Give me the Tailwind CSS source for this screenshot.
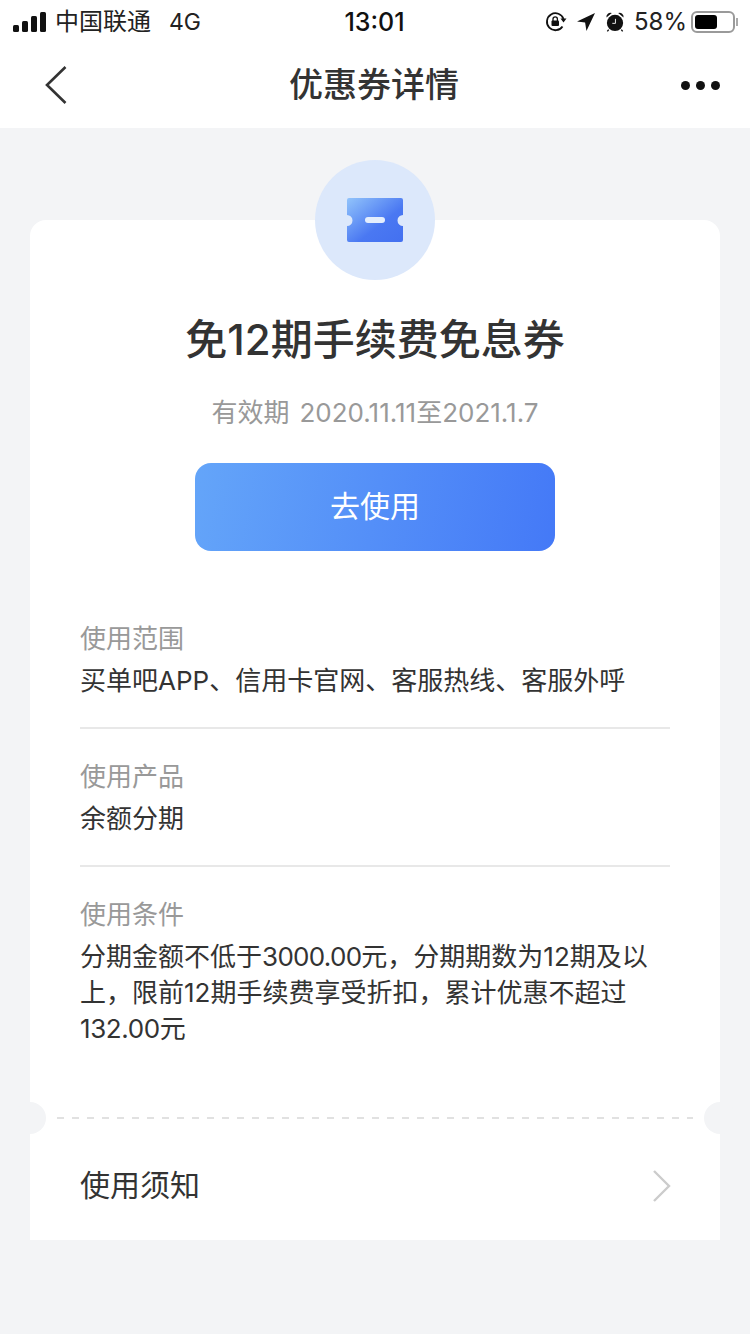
<!DOCTYPE html>
<html lang="zh-CN">
<head>
    <meta charset="UTF-8">
    <meta name="viewport" content="width=device-width, initial-scale=1.0">
    <title>优惠券详情</title>
    <script src="https://cdn.jsdelivr.net/npm/@tailwindcss/browser@4"></script>
</head>
<body class="w-[750px] h-[1334px] overflow-hidden bg-[#f3f4f6] font-['Inter','Noto_Sans_CJK_SC',sans-serif] text-[#333]">
    <!-- status bar -->
    <div class="h-[44px] bg-white flex items-center justify-between pl-[13px] pr-[12px] text-[#222] text-[25px] leading-none">
        <div class="flex items-center w-[250px]">
            <svg width="34" height="20" viewBox="0 0 34 20" fill="#111"><rect x="0" y="13" width="6" height="7" rx="1.5"/><rect x="9" y="9" width="6" height="11" rx="1.5"/><rect x="18" y="4" width="6" height="16" rx="1.5"/><rect x="27" y="0" width="6" height="20" rx="1.5"/></svg>
            <span class="ml-[8px] text-[24px]">中国联通</span>
            <span class="ml-[18px] text-[23px]">4G</span>
        </div>
        <div class="font-medium text-[25px] text-[#111] mr-[2px]">13:01</div>
        <div class="flex items-center justify-end w-[250px]">
            <svg width="22" height="22" viewBox="0 0 22 22" fill="none"><path d="M17.500 15.500A8.500 8.500 0 1 1 18.500 8" stroke="#111" stroke-width="1.800"/><path d="M15.500 7.500h6l-3 4z" fill="#111"/><rect x="6.500" y="9.500" width="7.500" height="5.500" rx="1" fill="#111"/><path d="M8 10V8a2.200 2.200 0 0 1 4.400 0v2" stroke="#111" stroke-width="1.300"/></svg>
            <svg class="ml-[10px]" width="18" height="18" viewBox="0 0 20 20" fill="#111"><path d="M20 0 0 9.500l9 1L10.500 20z"/></svg>
            <svg class="ml-[11px]" width="18" height="20" viewBox="0 0 20 22" fill="#111"><circle cx="10" cy="12" r="9"/><path d="M0.500 6a4.500 4.500 0 0 1 6-5zM19.500 6a4.500 4.500 0 0 0-6-5z"/><path d="M3 19.500 1.500 21.500M17 19.500l1.500 2" stroke="#111" stroke-width="1.500"/><path d="M10.500 7.500v5H7" stroke="#fff" stroke-width="1" fill="none"/></svg>
            <span class="ml-[10px] text-[24px]">58%</span>
            <div class="ml-[4px] w-[44px] h-[22px] rounded-[6px] border-2 border-[#9a9a9a] p-[2px]">
                <div class="w-[22px] h-full rounded-[3px] bg-black"></div>
            </div>
            <div class="w-[2px] h-[8px] bg-[#aaa] ml-[1px]"></div>
        </div>
    </div>
    <!-- nav -->
    <div class="h-[84px] bg-white flex items-center justify-between pl-[44px] pr-[30px] pb-[2px]">
        <svg width="24" height="40" viewBox="0 0 24 40" fill="none"><path d="M21.500 2 3 20l18.500 18" stroke="#333" stroke-width="2.600"/></svg>
        <h1 class="text-[34px] font-medium text-[#333] leading-none mr-[1px]">优惠券详情</h1>
        <div class="flex gap-[6px]">
            <span class="w-[9px] h-[9px] rounded-full bg-[#111]"></span>
            <span class="w-[9px] h-[9px] rounded-full bg-[#111]"></span>
            <span class="w-[9px] h-[9px] rounded-full bg-[#111]"></span>
        </div>
    </div>
    <main class="px-[30px] pt-[92px]">
        <div class="relative h-[1020px] bg-white rounded-t-[16px]">
            <!-- coupon badge -->
            <div class="absolute left-[285px] top-[-60px] w-[120px] h-[120px] rounded-full bg-[#dce8fb] flex items-center justify-center">
                <svg width="56" height="44" viewBox="0 0 56 44">
                    <defs><linearGradient id="ticket" x1="0" y1="0" x2="1" y2="1"><stop offset="0" stop-color="#92c4fb"/><stop offset="0.6" stop-color="#4a78f2"/><stop offset="1" stop-color="#4370f0"/></linearGradient></defs>
                    <path fill="url(#ticket)" d="M2 0h52a2 2 0 0 1 2 2v15a5.500 5.500 0 0 0 0 11v14a2 2 0 0 1-2 2H2a2 2 0 0 1-2-2V28a5.500 5.500 0 0 0 0-11V2a2 2 0 0 1 2-2z"/>
                    <rect x="18" y="19" width="20" height="6" rx="3" fill="#e4eefd"/>
                </svg>
            </div>
            <div class="flex flex-col items-center pt-[96px]">
                <h2 class="text-[42px] font-medium text-[#333] leading-[48px]">免12期手续费免息券</h2>
                <p class="mt-[32px] text-[26px] text-[#999] leading-[34px]">有效期<span class="ml-[10px]">2020.11.11至2021.1.7</span></p>
                <button class="mt-[33px] w-[360px] h-[88px] rounded-[16px] bg-[linear-gradient(100deg,#64a5f9,#4479f7)] text-white text-[30px] pb-[2px]">去使用</button>
            </div>
            <div class="px-[50px] mt-[70px]">
                <div class="pb-[28px] border-b-2 border-[#e8e8e8]">
                    <div class="text-[26px] leading-[36px] text-[#999]">使用范围</div>
                    <div class="mt-[6px] text-[26px] leading-[36px] text-[#333]">买单吧APP、信用卡官网、客服热线、客服外呼</div>
                </div>
                <div class="pt-[30px] pb-[28px] border-b-2 border-[#e8e8e8]">
                    <div class="text-[26px] leading-[36px] text-[#999]">使用产品</div>
                    <div class="mt-[6px] text-[26px] leading-[36px] text-[#333]">余额分期</div>
                </div>
                <div class="pt-[30px]">
                    <div class="text-[26px] leading-[36px] text-[#999]">使用条件</div>
                    <div class="mt-[6px] text-[26px] leading-[36px] text-[#333]">
                        <div>分期金额不低于<span class="tracking-[-0.7px]">3000.00</span>元，分期期数为12期及以</div>
                        <div>上，限前12期手续费享受折扣，累计优惠不超过</div>
                        <div><span class="tracking-[-0.4px]">132.00</span>元</div>
                    </div>
                </div>
            </div>
            <!-- tear line -->
            <div class="absolute left-[-16px] top-[882px] w-[32px] h-[32px] rounded-full bg-[#f3f4f6]"></div>
            <div class="absolute right-[-16px] top-[882px] w-[32px] h-[32px] rounded-full bg-[#f3f4f6]"></div>
            <svg class="absolute left-[27px] top-[897px]" width="636" height="2"><line x1="0" y1="1" x2="636" y2="1" stroke="#d8d8d8" stroke-width="1.500" stroke-dasharray="7 8"/></svg>
            <div class="absolute left-[50px] right-[48px] top-[939px] h-[52px] flex items-center justify-between">
                <span class="text-[30px] text-[#333]">使用须知</span>
                <svg class="mt-[2px]" width="20" height="34" viewBox="0 0 20 34" fill="none"><path d="M2 2l15 15L2 32" stroke="#ccc" stroke-width="2.400"/></svg>
            </div>
        </div>
    </main>
</body>
</html>
